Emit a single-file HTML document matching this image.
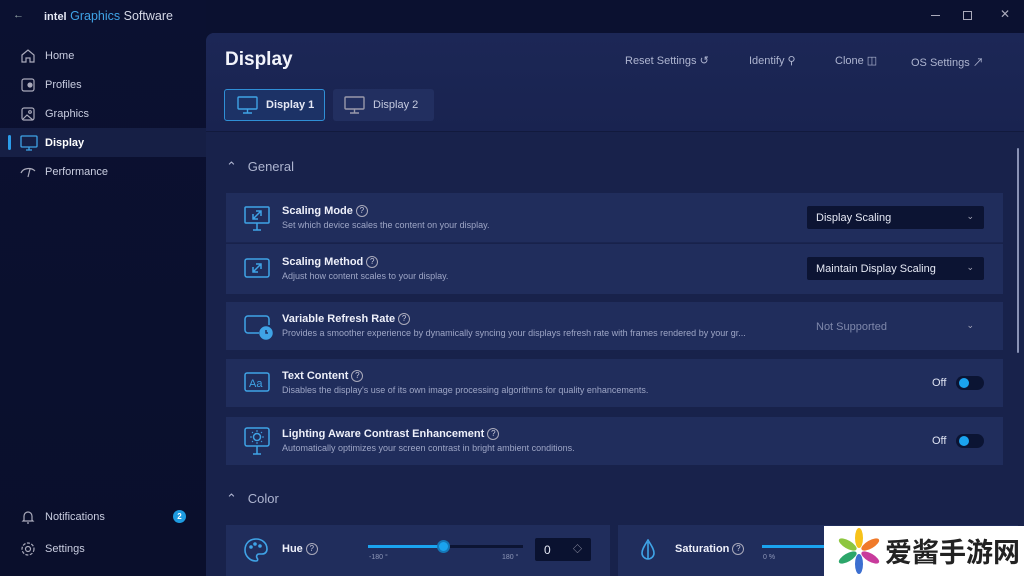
<!DOCTYPE html>
<html style="width:1024px;height:576px;overflow:hidden"><head><meta charset="utf-8"><style>
*{box-sizing:border-box;margin:0;padding:0}
body{width:1024px;height:576px;overflow:hidden;background:#0b1130;font-family:"Liberation Sans","Noto Sans CJK SC",sans-serif;color:#e6e9f5;position:relative}
.abs{position:absolute}
.side{left:0;top:0;width:206px;height:576px;background:linear-gradient(#0b1131,#0a0f2c)}
.nav{position:absolute;left:0;width:206px;height:29px;font-size:11px;color:#c9cde0;display:flex;align-items:center}
.nav svg{position:absolute;left:20px}
.nav span{position:absolute;left:45px}
.main{left:206px;top:33px;width:818px;height:543px;background:#18224b;border-top-left-radius:8px;overflow:hidden}
.hdr{position:absolute;left:0;top:0;width:818px;height:98px;background:linear-gradient(#1c2756,#192350)}
.row{position:absolute;left:20px;width:777px;background:#202d5c}
.t{position:absolute;left:56px;font-size:11px;font-weight:bold;color:#eef0fa;white-space:nowrap}
.d{position:absolute;left:56px;font-size:9px;color:#9ea6c6;white-space:nowrap}
.q{display:inline-block;width:12px;height:12px;border:1px solid #aab;border-radius:50%;font-size:8px;text-align:center;line-height:10px;font-weight:normal;margin-left:3px;vertical-align:1px;color:#ccd}
.dd{position:absolute;left:581px;width:177px;height:23px;background:#0c1433;border-radius:2px;font-size:11px;padding:6px 9px;color:#e6e9f5}
.dd i{position:absolute;right:10px;top:5px;font-style:normal;font-size:9px;color:#aab}
.tg{position:absolute;left:730px;width:28px;height:14px;background:#0b1433;border-radius:7px}
.tg b{position:absolute;left:3px;top:2px;width:10px;height:10px;border-radius:50%;background:#1aa3ef}
.off{position:absolute;left:706px;font-size:11px;color:#dfe3f2}
.ic{position:absolute;left:18px}
.act{font-size:11px;color:#aeb5d0;position:absolute;top:21px;white-space:nowrap}
</style></head><body>
<div class="abs side"></div>
<div class="abs" style="left:13px;top:9px;font-size:11px;color:#9aa">←</div>
<div class="abs" style="left:44px;top:9px;font-size:12.5px;white-space:nowrap"><b style="font-size:11px">intel</b> <span style="color:#3fa3e6">Graphics</span> <span style="color:#d5d8e6">Software</span></div>
<div class="abs" style="left:931px;top:15px;width:9px;height:1px;background:#aab"></div>
<div class="abs" style="left:963px;top:11px;width:9px;height:9px;border:1px solid #aab"></div>
<div class="abs" style="left:1000px;top:7px;font-size:12px;color:#aab">✕</div>

<div class="nav" style="top:41px"><svg width="16" height="16" viewBox="0 0 16 16" fill="none" stroke="#aab" stroke-width="1.2"><path d="M2 7L8 2l6 5v7H10v-4H6v4H2z"/></svg><span>Home</span></div>
<div class="nav" style="top:70px"><svg width="16" height="16" viewBox="0 0 16 16" fill="none" stroke="#aab" stroke-width="1.2"><rect x="2" y="2" width="12" height="12" rx="2"/><circle cx="10" cy="8" r="2" fill="#aab"/></svg><span>Profiles</span></div>
<div class="nav" style="top:99px"><svg width="16" height="16" viewBox="0 0 16 16" fill="none" stroke="#aab" stroke-width="1.2"><rect x="2" y="2" width="12" height="12" rx="2"/><path d="M3 13l4-4 6 5"/><circle cx="10" cy="6" r="1.3"/></svg><span>Graphics</span></div>
<div class="nav" style="top:128px;background:#161f45;color:#fff;font-weight:bold"><div class="abs" style="left:8px;top:7px;width:3px;height:15px;background:#2b9cea;border-radius:2px"></div><svg width="18" height="16" viewBox="0 0 18 16" fill="none" stroke="#3fa3e6" stroke-width="1.3"><rect x="1" y="1" width="16" height="11" rx="1"/><path d="M6 15h6M9 12v3"/></svg><span>Display</span></div>
<div class="nav" style="top:157px"><svg width="16" height="16" viewBox="0 0 16 16" fill="none" stroke="#aab" stroke-width="1.2"><path d="M1 9c2-5 10-6 14-2M8 13l2-8"/></svg><span>Performance</span></div>
<div class="nav" style="top:502px"><svg width="16" height="16" viewBox="0 0 16 16" fill="none" stroke="#aab" stroke-width="1.2"><path d="M4 11V7a4 4 0 018 0v4l1 1H3zM7 14h2"/></svg><span>Notifications</span><div class="abs" style="left:173px;top:8px;width:13px;height:13px;border-radius:50%;background:#1e9be0;font-size:8px;text-align:center;line-height:13px;color:#fff;font-weight:bold">2</div></div>
<div class="nav" style="top:534px"><svg width="16" height="16" viewBox="0 0 16 16" fill="none" stroke="#aab" stroke-width="1.2"><circle cx="8" cy="8" r="2.5"/><circle cx="8" cy="8" r="6" stroke-dasharray="3 1.5"/></svg><span>Settings</span></div>

<div class="abs main">
 <div class="hdr"></div>
 <div class="abs" style="left:19px;top:16px;font-size:19px;font-weight:bold;color:#f2f4fb">Display</div>
 <div class="act" style="left:419px">Reset Settings ↺</div>
 <div class="act" style="left:543px">Identify ⚲</div>
 <div class="act" style="left:629px">Clone ◫</div>
 <div class="act" style="left:705px">OS Settings ↗</div>
 <div class="abs" style="left:18px;top:56px;width:101px;height:32px;border:1.5px solid #2f8fd6;background:#1c3266;border-radius:3px"></div>
 <svg class="abs" style="left:31px;top:63px" width="21" height="18" viewBox="0 0 21 18" fill="none" stroke="#3fa3e6" stroke-width="1.4"><rect x="1" y="1" width="19" height="12" rx="1"/><path d="M6 17h9M10.5 13v4"/></svg>
 <div class="abs" style="left:60px;top:66px;font-size:11px;font-weight:bold">Display 1</div>
 <div class="abs" style="left:127px;top:56px;width:101px;height:32px;background:#222f60;border-radius:3px"></div>
 <svg class="abs" style="left:138px;top:63px" width="21" height="18" viewBox="0 0 21 18" fill="none" stroke="#99a" stroke-width="1.4"><rect x="1" y="1" width="19" height="12" rx="1"/><path d="M6 17h9M10.5 13v4"/></svg>
 <div class="abs" style="left:167px;top:66px;font-size:11px;color:#c6cbe0">Display 2</div>
 <div class="abs" style="left:0;top:98px;width:818px;height:1px;background:#121a3d"></div>
 <div class="abs" style="left:811px;top:115px;width:2px;height:205px;background:#8a93b6;border-radius:1px"></div>

 <div class="abs" style="left:20px;top:126px;font-size:13px;color:#aeb5d0">⌃&nbsp;&nbsp; General</div>

 <div class="row" style="top:160px;height:50px;border-bottom:1px solid #1a2550">
  <svg class="ic" style="top:12px" width="26" height="26" viewBox="0 0 26 26" fill="none" stroke="#3fa3e6" stroke-width="1.5"><rect x="1" y="2" width="24" height="16" rx="1"/><path d="M9 25h8M13 18v7M9 14l8-8M12 6h5v5M9 9v5h5"/></svg>
  <div class="t" style="top:12px">Scaling Mode<span class="q">?</span></div><div class="d" style="top:27px">Set which device scales the content on your display.</div>
  <div class="dd" style="top:13px">Display Scaling<i>⌄</i></div>
 </div>
 <div class="row" style="top:211px;height:50px">
  <svg class="ic" style="top:14px" width="26" height="22" viewBox="0 0 26 22" fill="none" stroke="#3fa3e6" stroke-width="1.5"><rect x="1" y="1" width="24" height="18" rx="2"/><path d="M9 14l8-8M12 6h5v5M9 9v5h5"/></svg>
  <div class="t" style="top:12px">Scaling Method<span class="q">?</span></div><div class="d" style="top:27px">Adjust how content scales to your display.</div>
  <div class="dd" style="top:13px">Maintain Display Scaling<i>⌄</i></div>
 </div>
 <div class="row" style="top:269px;height:48px">
  <svg class="ic" style="top:12px" width="30" height="26" viewBox="0 0 30 26" fill="none" stroke="#3fa3e6" stroke-width="1.5"><path d="M15 19H4a3 3 0 01-3-3V5a3 3 0 013-3h18a3 3 0 013 3v6"/><circle cx="22" cy="19" r="6" fill="#3fa3e6"/><path d="M22 16v3h2" stroke="#202d5c"/></svg>
  <div class="t" style="top:11px">Variable Refresh Rate<span class="q">?</span></div><div class="d" style="top:26px">Provides a smoother experience by dynamically syncing your displays refresh rate with frames rendered by your gr...</div>
  <div class="dd" style="top:13px;background:none;color:#7f88ab">Not Supported<i>⌄</i></div>
 </div>
 <div class="row" style="top:326px;height:48px">
  <svg class="ic" style="top:13px" width="26" height="22" viewBox="0 0 26 22"><rect x="1" y="1" width="24" height="18" rx="2" fill="none" stroke="#3fa3e6" stroke-width="1.5"/><text x="5" y="15" font-size="11" fill="#3fa3e6" font-family="Liberation Sans">Aa</text></svg>
  <div class="t" style="top:11px">Text Content<span class="q">?</span></div><div class="d" style="top:26px">Disables the display's use of its own image processing algorithms for quality enhancements.</div>
  <div class="off" style="top:18px">Off</div><div class="tg" style="top:17px"><b></b></div>
 </div>
 <div class="row" style="top:384px;height:48px">
  <svg class="ic" style="top:10px" width="26" height="28" viewBox="0 0 26 28" fill="none" stroke="#3fa3e6" stroke-width="1.5"><rect x="1" y="1" width="24" height="18" rx="2"/><path d="M9 27h8M13 19v8"/><circle cx="13" cy="10" r="3.5"/><path d="M13 3v2M13 15v2M6 10h2M18 10h2M8 5l1 1M17 14l1 1M18 5l-1 1M8 15l1-1" stroke-width="1"/></svg>
  <div class="t" style="top:11px">Lighting Aware Contrast Enhancement<span class="q">?</span></div><div class="d" style="top:26px">Automatically optimizes your screen contrast in bright ambient conditions.</div>
  <div class="off" style="top:18px">Off</div><div class="tg" style="top:17px"><b></b></div>
 </div>

 <div class="abs" style="left:20px;top:458px;font-size:13px;color:#aeb5d0">⌃&nbsp;&nbsp; Color</div>
 <div class="row" style="top:492px;height:60px;width:384px">
  <svg class="abs" style="left:17px;top:12px" width="26" height="26" viewBox="0 0 26 26" fill="none" stroke="#3fa3e6" stroke-width="1.6"><path d="M13 2C6 2 2 7 2 13c0 6 5 11 11 11 2 0 2-2 1-3-1-2 0-4 2-4h3c3 0 5-2 5-5C24 6 19 2 13 2z"/><circle cx="8" cy="10" r="1" fill="#3fa3e6"/><circle cx="12" cy="7" r="1" fill="#3fa3e6"/><circle cx="17" cy="9" r="1" fill="#3fa3e6"/></svg>
  <div class="t" style="left:56px;top:18px">Hue<span class="q">?</span></div>
  <div class="abs" style="left:142px;top:20px;width:155px;height:3px;background:#0c1433"></div>
  <div class="abs" style="left:142px;top:20px;width:75px;height:3px;background:#1aa3ef"></div>
  <div class="abs" style="left:211px;top:15px;width:13px;height:13px;border-radius:50%;background:#1aa3ef;border:2px solid #1577b8"></div>
  <div class="abs" style="left:143px;top:29px;font-size:7px;color:#8e97b8">-180 °</div>
  <div class="abs" style="left:276px;top:29px;font-size:7px;color:#8e97b8">180 °</div>
  <div class="abs" style="left:309px;top:13px;width:56px;height:23px;background:#0a1230;border-radius:2px;font-size:12px;padding:5px 9px">0<span style="position:absolute;right:9px;top:4px;color:#aab;font-size:9px">◇</span></div>
 </div>
 <div class="row" style="top:492px;height:60px;left:412px;width:400px">
  <svg class="abs" style="left:22px;top:14px" width="16" height="22" viewBox="0 0 16 22" fill="none" stroke="#3fa3e6" stroke-width="1.6"><path d="M8 1C5 6 2 10 2 14a6 6 0 0012 0c0-4-3-8-6-13z"/><path d="M8 3v17" /></svg>
  <div class="t" style="left:57px;top:18px">Saturation<span class="q">?</span></div>
  <div class="abs" style="left:144px;top:20px;width:80px;height:3px;background:#1aa3ef"></div>
  <div class="abs" style="left:145px;top:29px;font-size:7px;color:#8e97b8">0 %</div>
 </div>
</div>

<div class="abs" style="left:824px;top:526px;width:200px;height:50px;background:#fff;overflow:hidden">
<svg class="abs" style="left:12px;top:1px" width="46" height="48" viewBox="0 0 46 48"><g transform="translate(23,24)"><ellipse cx="0" cy="-13" rx="4" ry="10" fill="#f7c21a"/><ellipse cx="0" cy="-13" rx="4" ry="10" fill="#f07a2a" transform="rotate(60)"/><ellipse cx="0" cy="-13" rx="4" ry="10" fill="#c83b9c" transform="rotate(120)"/><ellipse cx="0" cy="-13" rx="4" ry="10" fill="#3c6fd0" transform="rotate(180)"/><ellipse cx="0" cy="-13" rx="4" ry="10" fill="#2ca66a" transform="rotate(240)"/><ellipse cx="0" cy="-13" rx="4" ry="10" fill="#8dc63f" transform="rotate(300)"/></g></svg>
<div class="abs" style="left:61px;top:8px;font-size:27px;font-weight:bold;color:#222;font-family:'Noto Sans CJK SC',sans-serif;line-height:34px;white-space:nowrap">爱酱手游网</div>
</div>
</body></html>
